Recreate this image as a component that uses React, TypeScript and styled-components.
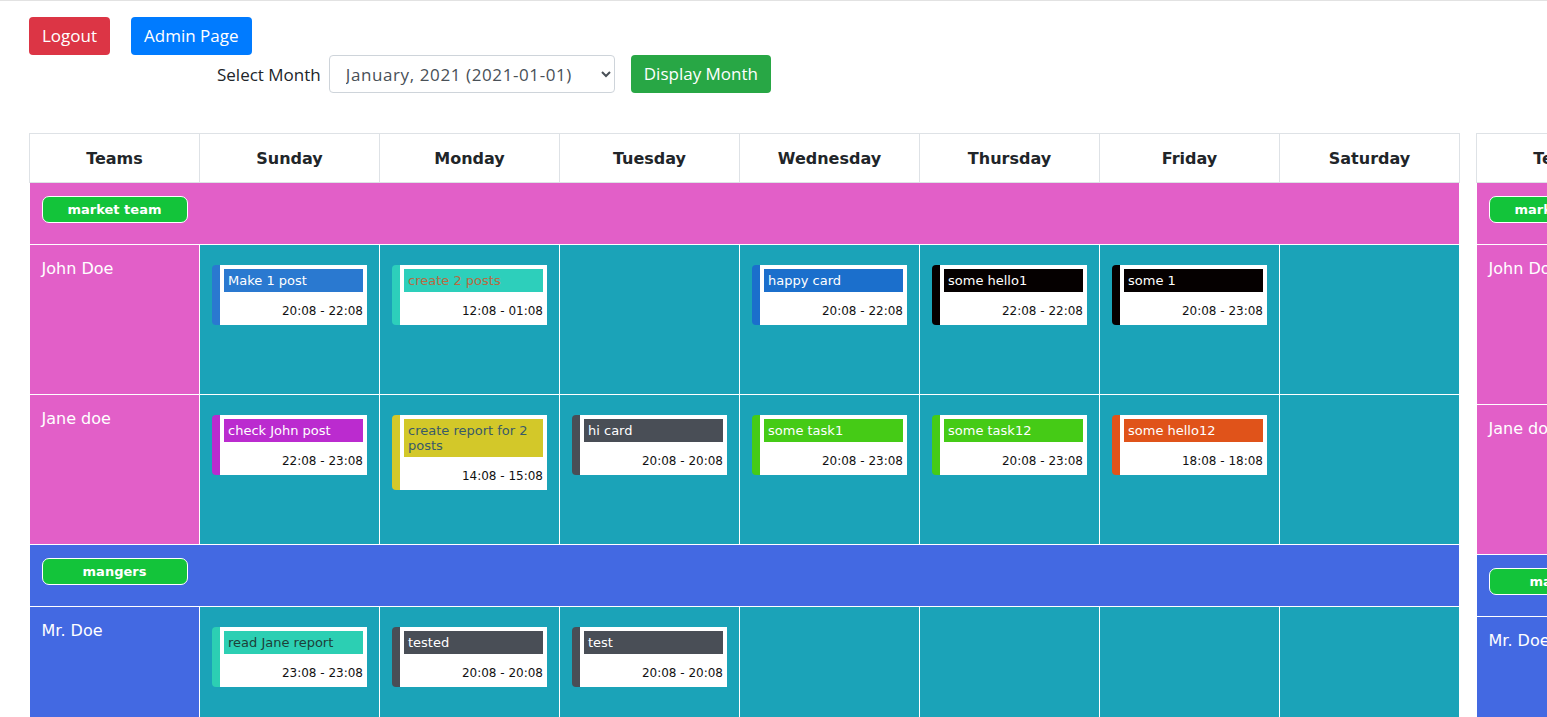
import React from "react";
import styled, { createGlobalStyle } from "styled-components";

const GlobalStyle = createGlobalStyle`
  html, body {
    margin: 0;
    padding: 0;
    overflow: hidden;
    background: #ffffff;
  }
  body {
    font-family: "Open Sans", "Liberation Sans", sans-serif;
    color: #212529;
  }
`;

type Task = { title: string; time: string; color: string; text?: string };
type Member = { name: string; tasks: Record<number, Task> };
type Team = { name: string; color: string; members: Member[] };

const DAYS = ["Sunday", "Monday", "Tuesday", "Wednesday", "Thursday", "Friday", "Saturday"];

const TEAMS: Team[] = [
  {
    name: "market team",
    color: "#e25fc8",
    members: [
      {
        name: "John Doe",
        tasks: {
          0: { title: "Make 1 post", time: "20:08 - 22:08", color: "#2a79d0" },
          1: { title: "create 2 posts", time: "12:08 - 01:08", color: "#2dcfbb", text: "#b86a42" },
          3: { title: "happy card", time: "20:08 - 22:08", color: "#1b6fcc" },
          4: { title: "some hello1", time: "22:08 - 22:08", color: "#050000" },
          5: { title: "some 1", time: "20:08 - 23:08", color: "#050000" },
        },
      },
      {
        name: "Jane doe",
        tasks: {
          0: { title: "check John post", time: "22:08 - 23:08", color: "#bb2bcf" },
          1: { title: "create report for 2 posts", time: "14:08 - 15:08", color: "#d3c829", text: "#395a68" },
          2: { title: "hi card", time: "20:08 - 20:08", color: "#494e56" },
          3: { title: "some task1", time: "20:08 - 23:08", color: "#45cb16" },
          4: { title: "some task12", time: "20:08 - 23:08", color: "#45cb16" },
          5: { title: "some hello12", time: "18:08 - 18:08", color: "#e0531a" },
        },
      },
    ],
  },
  {
    name: "mangers",
    color: "#4369e2",
    members: [
      {
        name: "Mr. Doe",
        tasks: {
          0: { title: "read Jane report", time: "23:08 - 23:08", color: "#2ccfb3", text: "#1d4038" },
          1: { title: "tested", time: "20:08 - 20:08", color: "#494e56" },
          2: { title: "test", time: "20:08 - 20:08", color: "#494e56" },
        },
      },
    ],
  },
];

const Page = styled.div`
  border-top: 1px solid #e2e2e2;
  padding: 16px 0 0 29px;
  width: max-content;
`;

const TopBar = styled.div`
  display: flex;
  gap: 21px;
`;

const Button = styled.button<{ $variant: "danger" | "primary" | "success" }>`
  height: 38px;
  padding: 0 12px;
  border: 1px solid transparent;
  border-radius: 4px;
  font-family: "Open Sans", "Liberation Sans", sans-serif;
  font-size: 17px;
  line-height: 1.5;
  color: #ffffff;
  cursor: pointer;
  background: ${(p) =>
    p.$variant === "danger" ? "#dc3545" : p.$variant === "primary" ? "#007bff" : "#28a745"};
`;

const MonthForm = styled.form`
  display: flex;
  align-items: center;
  margin-left: 188px;
`;

const Label = styled.label`
  font-size: 17px;
  color: #212529;
  margin-right: 8px;
`;

const Select = styled.select`
  width: 286px;
  height: 38px;
  padding: 0 10px 0 12px;
  border: 1px solid #ced4da;
  border-radius: 4px;
  background: #ffffff;
  font-family: "Open Sans", "Liberation Sans", sans-serif;
  font-size: 17px;
  letter-spacing: 0.6px;
  color: #495057;
  margin-right: 16px;
`;

const Tables = styled.div`
  display: flex;
  gap: 16px;
  margin-top: 40px;
  align-items: flex-start;
`;

const CalendarTable = styled.table`
  border-collapse: collapse;
  table-layout: fixed;
  width: 1430px;
  flex-shrink: 0;
  font-family: "DejaVu Sans", Verdana, sans-serif;
`;

const HeadCell = styled.th<{ $w: number }>`
  width: ${(p) => p.$w - 1}px;
  height: 48px;
  padding: 0;
  border: 1px solid #dee2e6;
  font-size: 16px;
  font-weight: bold;
  color: #212529;
  text-align: center;
  vertical-align: middle;
  background: #ffffff;
`;

const TeamCell = styled.td<{ $bg: string }>`
  height: 62px;
  box-sizing: border-box;
  padding: 13px 12px 0;
  background: ${(p) => p.$bg};
  border: 1px solid #ffffff;
  border-left: none;
  border-top: none;
  vertical-align: top;
`;

const TeamBadge = styled.span`
  display: inline-flex;
  align-items: center;
  justify-content: center;
  box-sizing: border-box;
  width: 146px;
  height: 27px;
  border: 1px solid #ffffff;
  border-radius: 7px;
  background: #13c43a;
  color: #ffffff;
  font-size: 13px;
  font-weight: bold;
`;

const NameCell = styled.td<{ $bg: string; $h: number }>`
  height: ${(p) => p.$h}px;
  padding: 12px 12px;
  background: ${(p) => p.$bg};
  border: 1px solid #ffffff;
  border-left: none;
  color: #ffffff;
  font-size: 16px;
  line-height: 24px;
  vertical-align: top;
  box-sizing: border-box;
`;

const DayCell = styled.td`
  padding: 20px 12px 12px;
  background: #1ba3b8;
  border: 1px solid #ffffff;
  vertical-align: top;
`;

const Card = styled.div<{ $c: string }>`
  width: 155px;
  box-sizing: border-box;
  background: #ffffff;
  border-left: 8px solid ${(p) => p.$c};
  border-radius: 4px 0 0 4px;
  padding: 4px 4px 5px;
`;

const CardTitle = styled.div<{ $c: string; $t: string }>`
  background: ${(p) => p.$c};
  color: ${(p) => p.$t};
  font-size: 13px;
  line-height: 15px;
  padding: 4px;
`;

const CardTime = styled.div`
  margin-top: 10px;
  text-align: right;
  font-size: 12px;
  line-height: 18px;
  color: #111111;
`;

function TaskCard({ task }: { task: Task }) {
  return (
    <Card $c={task.color}>
      <CardTitle $c={task.color} $t={task.text ?? "#ffffff"}>
        {task.title}
      </CardTitle>
      <CardTime>{task.time}</CardTime>
    </Card>
  );
}

function WeekTable({ rowHeights }: { rowHeights: Record<string, number> }) {
  return (
    <CalendarTable>
      <thead>
        <tr>
          <HeadCell $w={170}>Teams</HeadCell>
          {DAYS.map((d) => (
            <HeadCell key={d} $w={180}>
              {d}
            </HeadCell>
          ))}
        </tr>
      </thead>
      <tbody>
        {TEAMS.map((team) => (
          <React.Fragment key={team.name}>
            <tr>
              <TeamCell $bg={team.color} colSpan={8}>
                <TeamBadge>{team.name}</TeamBadge>
              </TeamCell>
            </tr>
            {team.members.map((m) => (
              <tr key={m.name}>
                <NameCell $bg={team.color} $h={rowHeights[m.name] ?? 150}>
                  {m.name}
                </NameCell>
                {DAYS.map((d, i) => (
                  <DayCell key={d}>{m.tasks[i] && <TaskCard task={m.tasks[i]} />}</DayCell>
                ))}
              </tr>
            ))}
          </React.Fragment>
        ))}
      </tbody>
    </CalendarTable>
  );
}

export default function App() {
  return (
    <>
      <GlobalStyle />
      <Page>
        <TopBar>
          <Button $variant="danger">Logout</Button>
          <Button $variant="primary">Admin Page</Button>
        </TopBar>
        <MonthForm onSubmit={(e) => e.preventDefault()}>
          <Label htmlFor="month">Select Month</Label>
          <Select id="month" defaultValue="2021-01-01">
            <option value="2021-01-01">January, 2021 (2021-01-01)</option>
            <option value="2021-02-01">February, 2021 (2021-02-01)</option>
          </Select>
          <Button type="submit" $variant="success">
            Display Month
          </Button>
        </MonthForm>
        <Tables>
          <WeekTable rowHeights={{ "John Doe": 150, "Jane doe": 150, "Mr. Doe": 150 }} />
          <WeekTable rowHeights={{ "John Doe": 160, "Jane doe": 150, "Mr. Doe": 150 }} />
        </Tables>
      </Page>
    </>
  );
}
